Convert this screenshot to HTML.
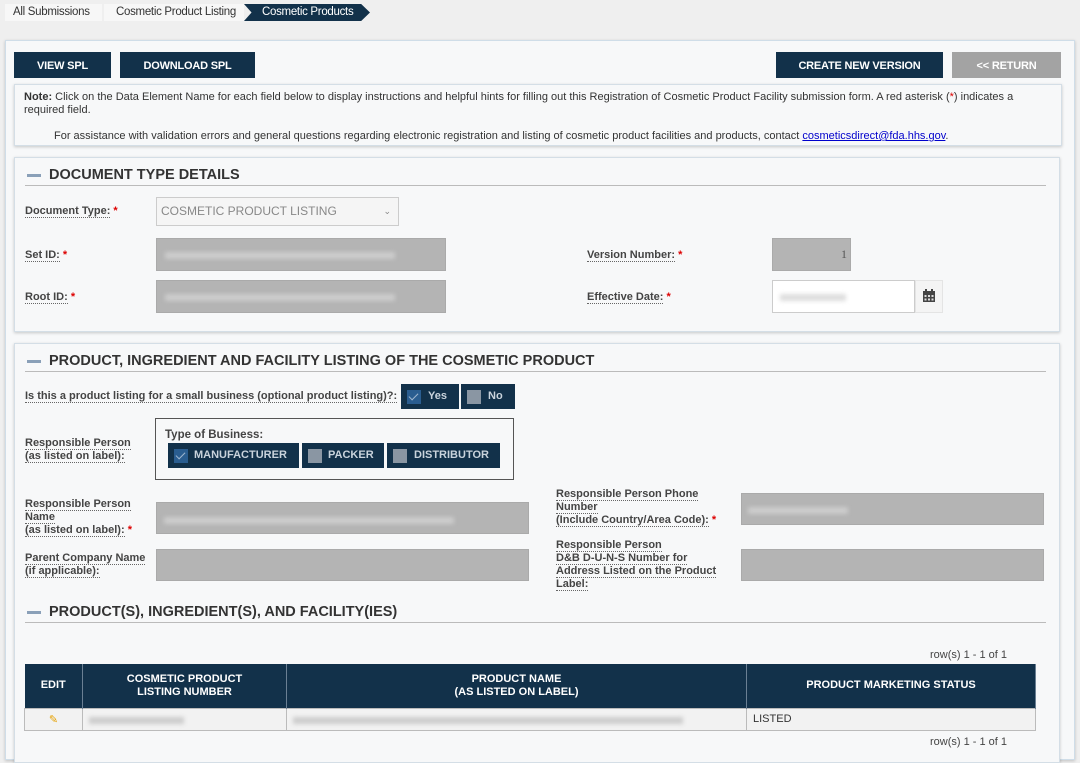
<!DOCTYPE html>
<html><head><meta charset="utf-8">
<style>
*{box-sizing:border-box;margin:0;padding:0}
body{width:1080px;height:748px;overflow:hidden;background:#efefef;font-family:"Liberation Sans",Arial,sans-serif;font-size:12px;color:#333;position:relative}
.a{position:absolute}
.crumb{top:4px;height:17px;font-size:11.5px;letter-spacing:-0.3px;line-height:17px;color:#333;white-space:nowrap;overflow:hidden}
.btn{position:absolute;top:52px;height:26px;background:#12314a;color:#fff;font-weight:bold;font-size:11px;text-align:center;line-height:28px;letter-spacing:-0.2px}
.panel{position:absolute;background:#f7f8f9;border:1px solid #d4dee6;box-shadow:0 1px 3px rgba(0,0,0,.2)}
.h{position:absolute;left:25px;font-size:14.5px;font-weight:bold;color:#333;white-space:nowrap}
.h:before{content:"";position:absolute;left:2px;top:7px;width:14px;height:3px;background:#8aa0b8}
.h span{padding-left:24px}
.hl{position:absolute;left:25px;width:1021px;height:1px;background:#bbb}
.lbl{position:absolute;font-weight:bold;font-size:11px;color:#444;line-height:13px}
.lbl u{text-decoration:none;border-bottom:1px dotted #666}
.req{color:#d00;font-weight:bold}
.gray{position:absolute;background:#b4b4b4;border:1px solid #aaa}
.blur{position:absolute;height:7px;background:#ddd;filter:blur(2px)}
.tog{position:absolute;background:#12314a;color:#c9d3dc;font-size:11px;font-weight:bold;line-height:25px;height:25px}
.cb{position:absolute;top:6px;left:6px;width:14px;height:14px;background:#8a96a3}
.cb.on{background:#2a5d90}
.cb.on:after{content:"";position:absolute;left:4px;top:1px;width:4px;height:8px;border:solid #9fb7d0;border-width:0 1.5px 1.5px 0;transform:rotate(45deg)}
th{background:#12314a;color:#fff;font-size:11px;font-weight:bold;border-right:1px solid #6a7f93;height:44px;line-height:13px}
td{border:1px solid #bbb;height:22px;background:#f2f2f2;font-size:11px}
</style></head><body>
<div class="a crumb" style="left:5px;width:97px;background:#f7f7f7;padding-left:8px">All Submissions</div>
<div class="a crumb" style="left:104px;width:140px;background:#f7f7f7;padding-left:12px">Cosmetic Product Listing</div>
<div class="a crumb" style="left:244px;width:126px;background:#12314a;color:#fff;padding-left:18px;clip-path:polygon(0 0,93% 0,100% 50%,93% 100%,0 100%,6% 50%)">Cosmetic Products</div>

<div class="panel" style="left:5px;top:40px;width:1070px;height:720px;border-color:#cfdde8"></div>
<div class="btn" style="left:14px;width:97px">VIEW SPL</div>
<div class="btn" style="left:120px;width:135px">DOWNLOAD SPL</div>
<div class="btn" style="left:776px;width:167px">CREATE NEW VERSION</div>
<div class="btn" style="left:952px;width:109px;background:#a3a3a3">&lt;&lt; RETURN</div>

<div class="panel" style="left:14px;top:84px;width:1048px;height:62px;font-size:11px;line-height:13px;padding:6px 9px;color:#333">
<b>Note:</b> Click on the Data Element Name for each field below to display instructions and helpful hints for filling out this Registration of Cosmetic Product Facility submission form. A red asterisk (<span style="color:#d00">*</span>) indicates a required field.
<div style="margin-top:13px;padding-left:30px">For assistance with validation errors and general questions regarding electronic registration and listing of cosmetic product facilities and products, contact <span style="color:#00c;text-decoration:underline">cosmeticsdirect@fda.hhs.gov</span>.</div>
</div>

<div class="panel" style="left:14px;top:157px;width:1046px;height:175px"></div>
<div class="h" style="top:167px"><span>DOCUMENT TYPE DETAILS</span></div>
<div class="hl" style="top:185px"></div>
<div class="lbl" style="left:25px;top:205px"><u>Document Type:</u> <span class="req">*</span></div>
<div class="a" style="left:156px;top:197px;width:243px;height:29px;border:1px solid #ccc;background:#f5f5f5;color:#888;font-size:12px;line-height:27px;padding-left:4px">COSMETIC PRODUCT LISTING<span style="position:absolute;right:7px;top:0;font-size:9px">&#8964;</span></div>
<div class="lbl" style="left:25px;top:249px"><u>Set ID:</u> <span class="req">*</span></div>
<div class="gray" style="left:156px;top:238px;width:290px;height:33px"></div>
<div class="blur" style="left:165px;top:252px;width:230px;background:#ccc"></div>
<div class="lbl" style="left:25px;top:291px"><u>Root ID:</u> <span class="req">*</span></div>
<div class="gray" style="left:156px;top:280px;width:290px;height:33px"></div>
<div class="blur" style="left:165px;top:294px;width:230px;background:#ccc"></div>
<div class="lbl" style="left:587px;top:249px"><u>Version Number:</u> <span class="req">*</span></div>
<div class="gray" style="left:772px;top:238px;width:79px;height:33px;text-align:right;padding-right:3px;line-height:31px;font-family:'Liberation Serif',serif;font-size:12px;color:#555">1</div>
<div class="lbl" style="left:587px;top:291px"><u>Effective Date:</u> <span class="req">*</span></div>
<div class="a" style="left:772px;top:280px;width:143px;height:33px;background:#fff;border:1px solid #ccc"></div>
<div class="blur" style="left:780px;top:294px;width:66px"></div>
<div class="a" style="left:915px;top:280px;width:28px;height:33px;background:#f4f4f4;border:1px solid #e4e4e4"></div>
<svg class="a" style="left:922px;top:289px" width="14" height="14" viewBox="0 0 14 14"><rect x="1" y="2" width="12" height="11" fill="#444"/><rect x="3" y="0" width="2" height="3" fill="#444"/><rect x="9" y="0" width="2" height="3" fill="#444"/><g fill="#ddd"><rect x="2.5" y="6" width="2" height="2"/><rect x="6" y="6" width="2" height="2"/><rect x="9.5" y="6" width="2" height="2"/><rect x="2.5" y="9.5" width="2" height="2"/><rect x="6" y="9.5" width="2" height="2"/><rect x="9.5" y="9.5" width="2" height="2"/></g></svg>

<div class="panel" style="left:14px;top:343px;width:1046px;height:420px"></div>
<div class="h" style="top:353px"><span>PRODUCT, INGREDIENT AND FACILITY LISTING OF THE COSMETIC PRODUCT</span></div>
<div class="hl" style="top:371px"></div>
<div class="lbl" style="left:25px;top:390px"><u>Is this a product listing for a small business (optional product listing)?:</u></div>
<div class="tog" style="left:401px;top:384px;width:58px"><div class="cb on"></div><span style="padding-left:27px">Yes</span></div>
<div class="tog" style="left:461px;top:384px;width:54px"><div class="cb"></div><span style="padding-left:27px">No</span></div>

<div class="lbl" style="left:25px;top:437px"><u>Responsible Person</u><br><u>(as listed on label):</u></div>
<div class="a" style="left:155px;top:418px;width:359px;height:62px;border:1px solid #555"></div>
<div class="lbl" style="left:165px;top:429px;font-size:11.5px">Type of Business:</div>
<div class="tog" style="left:168px;top:443px;width:131px"><div class="cb on"></div><span style="padding-left:26px">MANUFACTURER</span></div>
<div class="tog" style="left:302px;top:443px;width:82px"><div class="cb"></div><span style="padding-left:26px">PACKER</span></div>
<div class="tog" style="left:387px;top:443px;width:113px"><div class="cb"></div><span style="padding-left:27px">DISTRIBUTOR</span></div>

<div class="lbl" style="left:25px;top:498px"><u>Responsible Person</u><br><u>Name</u><br><u>(as listed on label):</u> <span class="req">*</span></div>
<div class="gray" style="left:156px;top:502px;width:373px;height:32px"></div>
<div class="blur" style="left:164px;top:517px;width:290px;background:#ccc"></div>
<div class="lbl" style="left:25px;top:552px"><u>Parent Company Name</u><br><u>(if applicable):</u></div>
<div class="gray" style="left:156px;top:549px;width:373px;height:32px"></div>
<div class="lbl" style="left:556px;top:488px"><u>Responsible Person Phone</u><br><u>Number</u><br><u>(Include Country/Area Code):</u> <span class="req">*</span></div>
<div class="gray" style="left:741px;top:493px;width:303px;height:32px"></div>
<div class="blur" style="left:748px;top:507px;width:100px;background:#ccc"></div>
<div class="lbl" style="left:556px;top:539px"><u>Responsible Person</u><br><u>D&amp;B D-U-N-S Number for</u><br><u>Address Listed on the Product</u><br><u>Label:</u></div>
<div class="gray" style="left:741px;top:549px;width:303px;height:32px"></div>

<div class="h" style="top:604px"><span>PRODUCT(S), INGREDIENT(S), AND FACILITY(IES)</span></div>
<div class="hl" style="top:622px"></div>
<div class="a" style="left:930px;top:649px;font-size:11px;color:#444">row(s) 1 - 1 of 1</div>
<table class="a" style="left:24px;top:664px;width:1012px;border-collapse:collapse;text-align:center">
<tr><th style="width:58px">EDIT</th><th style="width:204px">COSMETIC PRODUCT<br>LISTING NUMBER</th><th style="width:460px">PRODUCT NAME<br>(AS LISTED ON LABEL)</th><th>PRODUCT MARKETING STATUS</th></tr>
<tr><td style="color:#e6a100">&#9998;</td><td style="position:relative"><div class="blur" style="left:6px;top:8px;width:95px;background:#ccc"></div></td><td style="position:relative"><div class="blur" style="left:6px;top:8px;width:390px;background:#ccc"></div></td><td style="text-align:left;padding-left:6px">LISTED</td></tr>
</table>
<div class="a" style="left:930px;top:736px;font-size:11px;color:#444">row(s) 1 - 1 of 1</div>
</body></html>
